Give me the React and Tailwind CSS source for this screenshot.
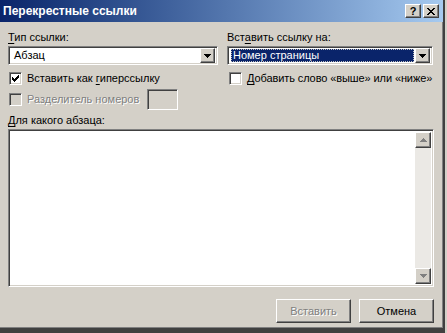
import React from 'react';

const font = "font-['Tahoma','Liberation_Sans',sans-serif]";

const sunken =
  'border border-t-[#808080] border-l-[#808080] border-b-white border-r-white shadow-[inset_1px_1px_0_#404040,inset_-1px_-1px_0_#d4d0c8]';
const raised =
  'border border-t-white border-l-white border-b-[#404040] border-r-[#404040] shadow-[inset_-1px_-1px_0_#808080]';

const U = ({ children }) => <span className="underline underline-offset-[2px]">{children}</span>;

const DownArrow = ({ color = '#000' }) => (
  <svg width="7" height="4" viewBox="0 0 7 4" shapeRendering="crispEdges">
    <path d="M0 0h7v1H0zM1 1h5v1H1zM2 2h3v1H2zM3 3h1v1H3z" fill={color} />
  </svg>
);

const UpArrow = ({ color = '#000' }) => (
  <svg width="7" height="4" viewBox="0 0 7 4" shapeRendering="crispEdges">
    <path d="M0 3h7v1H0zM1 2h5v1H1zM2 1h3v1H2zM3 0h1v1H3z" fill={color} />
  </svg>
);

const Combo = ({ value, selected }) => (
  <div className={`flex h-[19px] items-center bg-white p-[2px] ${sunken}`}>
    <div className="flex h-full flex-1 items-center pl-[1px]">
      {selected ? (
        <span className="flex h-full w-full items-center bg-[#0a246a] pl-[2px] text-white outline-1 outline-dotted outline-[#c0c0c0] outline-offset-[-1px]">
          {value}
        </span>
      ) : (
        <span className="pl-[2px]">{value}</span>
      )}
    </div>
    <div className={`ml-[1px] flex h-[15px] w-[15px] items-center justify-center bg-[#d4d0c8] ${raised}`}>
      <DownArrow />
    </div>
  </div>
);

const Check = ({ checked, disabled }) => (
  <div className={`flex h-[13px] w-[13px] shrink-0 items-center justify-center ${disabled ? 'bg-[#d4d0c8]' : 'bg-white'} ${sunken}`}>
    {checked && (
      <svg width="7" height="7" viewBox="0 0 7 7" shapeRendering="crispEdges">
        <path d="M6 0h1v3H6zM5 1h1v3H5zM4 2h1v3H4zM3 3h1v3H3zM2 4h1v3H2zM1 3h1v3H1zM0 2h1v3H0z" fill="#000" />
      </svg>
    )}
  </div>
);

const Button = ({ children, disabled }) => (
  <div className={`flex h-[24px] w-[75px] items-center justify-center bg-[#d4d0c8] ${raised}`}>
    <span className={disabled ? 'text-[#808080] [text-shadow:1px_1px_0_#fff]' : 'text-black'}>{children}</span>
  </div>
);

export default function App() {
  return (
    <div className={`flex h-[333px] w-[447px] bg-[#d4d0c8] text-[11px] leading-[13px] text-black ${font}`}>
      <div className="flex h-[333px] w-[445px] flex-col border-r-2 border-b-[5px] border-r-[#404040] border-b-[#404040] shadow-[inset_-1px_-1px_0_#808080]">
        {/* title bar */}
        <div className="flex h-[22px] items-center bg-gradient-to-r from-[#0a246a] to-[#a6caf0] pr-[4px] pl-[3px]">
          <span className="flex-1 text-[12px] font-bold text-white">Перекрестные ссылки</span>
          <div className="flex gap-[2px]">
            <div className={`flex h-[14px] w-[16px] items-center justify-center bg-[#d4d0c8] ${raised}`}>
              <span className="text-[11px] leading-none font-bold">?</span>
            </div>
            <div className={`flex h-[14px] w-[16px] items-center justify-center bg-[#d4d0c8] ${raised}`}>
              <svg width="8" height="7" viewBox="0 0 8 7" shapeRendering="crispEdges">
                <path d="M0 0h2v1H0zM6 0h2v1H6zM1 1h2v1H1zM5 1h2v1H5zM2 2h4v1H2zM3 3h2v1H3zM2 4h4v1H2zM1 5h2v1H1zM5 5h2v1H5zM0 6h2v1H0zM6 6h2v1H6z" fill="#000" />
              </svg>
            </div>
          </div>
        </div>

        <div className="flex flex-1 flex-col pt-[9px] pl-[8px] pr-[9px]">
          <div className="grid grid-cols-[210px_206px] gap-x-[9px]">
            <div className="flex flex-col">
              <span><U>Т</U>ип ссылки:</span>
              <div className="mt-[2px]">
                <Combo value="Абзац" />
              </div>
              <div className="mt-[7px] flex items-center gap-[5px] pl-[1px]">
                <Check checked />
                <span className="whitespace-nowrap">Вставить как <U>г</U>иперссылку</span>
              </div>
              <div className="mt-[4px] flex items-center">
                <div className="flex w-[139px] items-center gap-[5px] pl-[1px]">
                  <Check disabled />
                  <span className="whitespace-nowrap text-[#808080] [text-shadow:1px_1px_0_#fff]">Разделитель номеров</span>
                </div>
                <div className={`h-[21px] w-[31px] bg-[#d4d0c8] ${sunken}`} />
              </div>
            </div>
            <div className="flex flex-col">
              <span>Вст<U>а</U>вить ссылку на:</span>
              <div className="mt-[2px]">
                <Combo value="Номер страницы" selected />
              </div>
              <div className="mt-[7px] flex items-center gap-[5px] pl-[2px]">
                <Check />
                <span className="whitespace-nowrap tracking-[-0.1px]"><U>Д</U>обавить слово «выше» или «ниже»</span>
              </div>
            </div>
          </div>

          <span className="mt-[4px]"><U>Д</U>ля какого абзаца:</span>
          <div className={`mt-[2px] flex h-[158px] bg-white p-[2px] ${sunken}`}>
            <div className="flex-1" />
            <div className="flex w-[16px] flex-col bg-[#ebe9e5]">
              <div className={`flex h-[16px] items-center justify-center bg-[#d4d0c8] ${raised}`}>
                <UpArrow color="#808080" />
              </div>
              <div className="flex-1" />
              <div className={`flex h-[16px] items-center justify-center bg-[#d4d0c8] ${raised}`}>
                <DownArrow color="#808080" />
              </div>
            </div>
          </div>

          <div className="mt-[12px] flex justify-end gap-[8px]">
            <Button disabled>Вставить</Button>
            <Button>Отмена</Button>
          </div>
        </div>
      </div>
    </div>
  );
}
